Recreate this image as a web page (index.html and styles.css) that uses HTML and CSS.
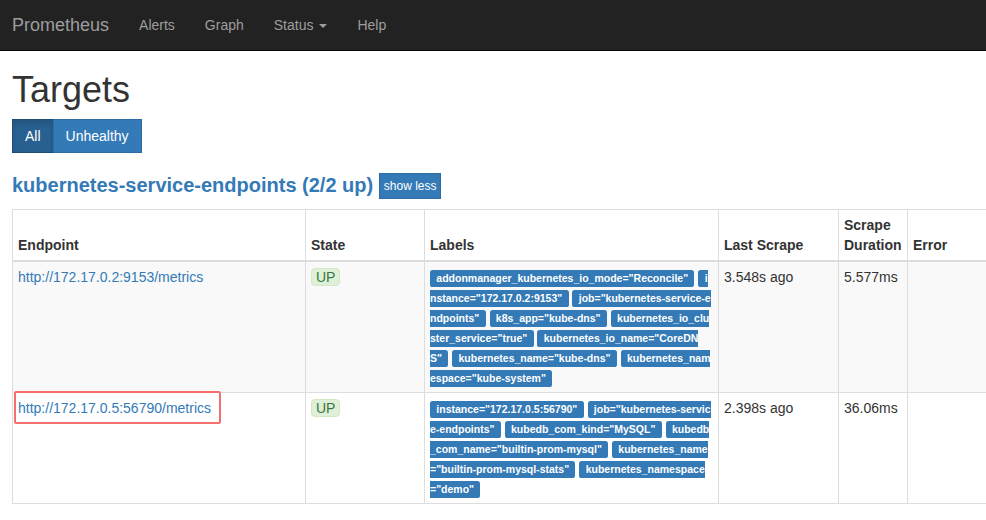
FILE: index.html
```html
<!DOCTYPE html>
<html lang="en">
<head>
  <meta charset="UTF-8" />
  <title>Prometheus Time Series Collection and Processing Server</title>
  <link rel="stylesheet" href="styles.css">
</head>
<body>

  <nav class="navbar">
    <a class="brand" href="#">Prometheus</a>
    <a class="nav-link" href="#">Alerts</a>
    <a class="nav-link" href="#">Graph</a>
    <a class="nav-link" href="#">Status <span class="caret"></span></a>
    <a class="nav-link" href="#">Help</a>
  </nav>

  <main class="container">
    <h1>Targets</h1>

    <div class="btn-group">
      <button class="btn active">All</button>
      <button class="btn">Unhealthy</button>
    </div>

    <div class="job-head">
      <h2><a href="#">kubernetes-service-endpoints (2/2 up)</a></h2>
      <button class="btn btn-small">show less</button>
    </div>

    <table class="targets">
      <colgroup>
        <col class="col-endpoint">
        <col class="col-state">
        <col class="col-labels">
        <col class="col-scrape">
        <col class="col-duration">
        <col class="col-error">
      </colgroup>
      <thead>
        <tr>
          <th>Endpoint</th>
          <th>State</th>
          <th>Labels</th>
          <th>Last Scrape</th>
          <th>Scrape Duration</th>
          <th>Error</th>
        </tr>
      </thead>
      <tbody>
        <tr class="striped">
          <td><a href="#">http://172.17.0.2:9153/metrics</a></td>
          <td><span class="state-up">UP</span></td>
          <td class="labels">
            <span class="label">addonmanager_kubernetes_io_mode="Reconcile"</span>
            <span class="label">instance="172.17.0.2:9153"</span>
            <span class="label">job="kubernetes-service-endpoints"</span>
            <span class="label">k8s_app="kube-dns"</span>
            <span class="label">kubernetes_io_cluster_service="true"</span>
            <span class="label">kubernetes_io_name="CoreDNS"</span>
            <span class="label">kubernetes_name="kube-dns"</span>
            <span class="label">kubernetes_namespace="kube-system"</span>
          </td>
          <td>3.548s ago</td>
          <td>5.577ms</td>
          <td></td>
        </tr>
        <tr>
          <td class="marked"><a href="#">http://172.17.0.5:56790/metrics</a><span class="mark-box"></span></td>
          <td><span class="state-up">UP</span></td>
          <td class="labels">
            <span class="label">instance="172.17.0.5:56790"</span>
            <span class="label">job="kubernetes-service-endpoints"</span>
            <span class="label">kubedb_com_kind="MySQL"</span>
            <span class="label">kubedb_com_name="builtin-prom-mysql"</span>
            <span class="label">kubernetes_name="builtin-prom-mysql-stats"</span>
            <span class="label">kubernetes_namespace="demo"</span>
          </td>
          <td>2.398s ago</td>
          <td>36.06ms</td>
          <td></td>
        </tr>
      </tbody>
    </table>
  </main>

</body>
</html>
```

FILE: styles.css
```css
* {
  box-sizing: border-box;
}

html, body {
  overflow: hidden;
}

body {
  margin: 0;
  background: #fff;
  color: #333;
  font-family: "Liberation Sans", Arial, sans-serif;
  font-size: 14px;
  line-height: 20px;
}

a {
  color: #337ab7;
  text-decoration: none;
}

.navbar {
  display: flex;
  height: 51px;
  padding-left: 12px;
  background: #222;
  border-bottom: 1px solid #080808;
}

.brand {
  padding: 15px 15px 15px 0;
  color: #9d9d9d;
  font-size: 18px;
}

.nav-link {
  padding: 15px;
  color: #9d9d9d;
}

.caret {
  display: inline-block;
  margin-left: 2px;
  vertical-align: middle;
  border-top: 4px solid #9d9d9d;
  border-left: 4px solid transparent;
  border-right: 4px solid transparent;
}

.container {
  padding: 0 0 0 12px;
  width: 1020px;
}

h1 {
  margin: 19px 0 8px;
  font-size: 36px;
  font-weight: 500;
  line-height: 40px;
}

.btn-group {
  display: flex;
  margin-top: 9px;
}

.btn {
  height: 34px;
  padding: 6px 12px;
  margin: 0;
  color: #fff;
  background: #337ab7;
  border: 1px solid #2e6da4;
  font-family: inherit;
  font-size: 14px;
  line-height: 20px;
  cursor: pointer;
}

.btn-group .btn + .btn {
  margin-left: -1px;
}

.btn.active {
  background: #286090;
  border-color: #204d74;
  box-shadow: inset 0 3px 5px rgba(0,0,0,.125);
}

.btn-small {
  width: 62px;
  height: 26px;
  padding: 3px 0;
  font-size: 12px;
  line-height: 18px;
}

.job-head {
  display: flex;
  align-items: center;
  gap: 6px;
  margin-top: 20px;
  margin-bottom: 10px;
}

h2 {
  margin: 0;
  padding-bottom: 2px;
  font-size: 20px;
  font-weight: 700;
  line-height: 22px;
}

.targets {
  width: 1008px;
  table-layout: fixed;
  border-collapse: collapse;
  border: 1px solid #ddd;
}

.col-endpoint { width: 293px; }
.col-state { width: 119px; }
.col-labels { width: 294px; }
.col-scrape { width: 120px; }
.col-duration { width: 69px; }

th, td {
  padding: 5px;
  border: 1px solid #ddd;
  text-align: left;
  vertical-align: top;
}

th {
  vertical-align: bottom;
  border-bottom-width: 2px;
  font-weight: 700;
}

.striped td {
  background: #f9f9f9;
}

.state-up {
  display: inline-block;
  padding: 0 4px;
  color: #3c763d;
  background: #dff0d8;
  border: 1px solid #d6e9c6;
  border-radius: 4px;
  line-height: 16px;
}

.labels {
  word-break: break-all;
}

.label {
  padding: .2em .6em .3em;
  color: #fff;
  background: #337ab7;
  border-radius: .25em;
  font-size: 10.5px;
  font-weight: 700;
  line-height: 1;
}

.marked {
  position: relative;
}

.mark-box {
  position: absolute;
  left: 1px;
  top: -2px;
  width: 207px;
  height: 33px;
  border: 2px solid #f66f70;
  border-radius: 2px;
}
```
